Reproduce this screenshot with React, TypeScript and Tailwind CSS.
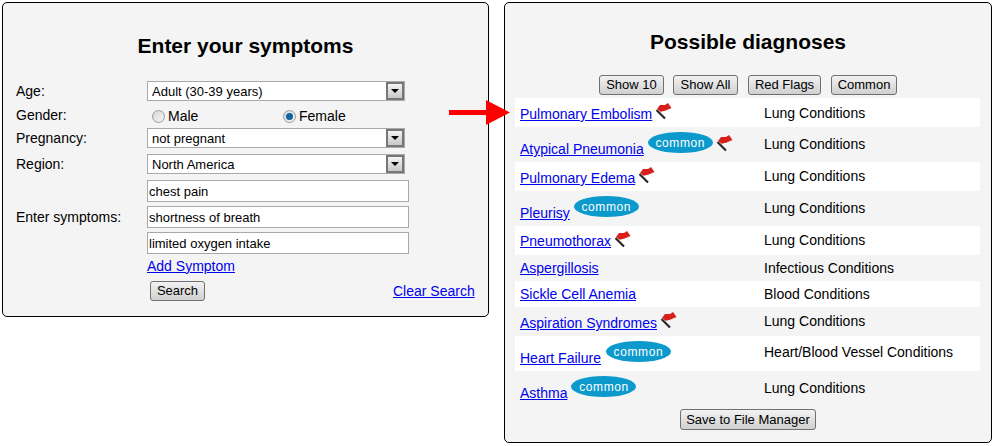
const font = "font-['Liberation_Sans',Arial,sans-serif]";

function Flag() {
  return (
    <svg width="17" height="18" viewBox="0 0 17 18" className="shrink-0">
      <path d="M1.5 8 L10 16.5" stroke="#2a2a2a" strokeWidth="2.2" />
      <path d="M2 7 L5 3 L10 3 L13 1 L16.5 6 L10 8.7 L5.7 9.7 Z" fill="#d8201a" />
    </svg>
  );
}

function Common() {
  return (
    <span className="inline-flex h-[21px] w-[65px] items-center justify-center rounded-[50%] bg-[#0c99cb] text-[12px] leading-none tracking-[0.6px] text-white">
      common
    </span>
  );
}

function Select({ value }: { value: string }) {
  return (
    <div className="flex h-5 w-[258px] items-center justify-between border border-[#a9a9a9] bg-white pl-1 pr-0 text-[13px]">
      <span className="translate-y-[1px]">{value}</span>
      <span className="flex h-[18px] w-[18px] items-center justify-center border-2 border-[#777] bg-gradient-to-b from-[#f4f4f4] to-[#c8c8c8]">
        <span className="h-0 w-0 border-x-[4px] border-t-[4px] border-x-transparent border-t-black" />
      </span>
    </div>
  );
}

function Input({ value }: { value: string }) {
  return (
    <div className="flex h-[22px] w-[262px] items-center border border-[#a9a9a9] bg-white pl-[1px] text-[13px]">
      <span className="translate-y-[1px]">{value}</span>
    </div>
  );
}

function Btn({ label, className = '' }: { label: string; className?: string }) {
  return (
    <button className={`flex h-5 items-center justify-center rounded-[3px] border border-[#707070] bg-gradient-to-b from-[#f2f2f2] to-[#d0d0d0] text-[13px] ${className}`}>
      {label}
    </button>
  );
}

function Radio({ on }: { on?: boolean }) {
  return (
    <span className="flex h-[13px] w-[13px] items-center justify-center rounded-full border border-[#9a9a9a] bg-gradient-to-br from-[#d8d8d8] to-[#f4f4f4]">
      {on && <span className="h-[7px] w-[7px] rounded-full bg-[#14659e]" />}
    </span>
  );
}

const rows = [
  { name: 'Pulmonary Embolism', cat: 'Lung Conditions', h: 'h-[29px]', flag: true, white: true, nameY: 'translate-y-[2px]', catY: 'translate-y-[1px]' },
  { name: 'Atypical Pneumonia', cat: 'Lung Conditions', h: 'h-[35px]', flag: true, common: true, nameY: 'translate-y-[5px]' },
  { name: 'Pulmonary Edema', cat: 'Lung Conditions', h: 'h-[29px]', flag: true, white: true, nameY: 'translate-y-[2px]' },
  { name: 'Pleurisy', cat: 'Lung Conditions', h: 'h-[35px]', common: true, nameY: 'translate-y-[5px]' },
  { name: 'Pneumothorax', cat: 'Lung Conditions', h: 'h-[29px]', flag: true, white: true, nameY: 'translate-y-[1px]' },
  { name: 'Aspergillosis', cat: 'Infectious Conditions', h: 'h-[26px]' },
  { name: 'Sickle Cell Anemia', cat: 'Blood Conditions', h: 'h-[26px]', white: true },
  { name: 'Aspiration Syndromes', cat: 'Lung Conditions', h: 'h-[29px]', flag: true, nameY: 'translate-y-[2px]' },
  { name: 'Heart Failure', cat: 'Heart/Blood Vessel Conditions', h: 'h-[35px]', white: true, common: true, nameY: 'translate-y-[5px]', catY: '-translate-y-[1px]', pill: 'ml-[5px]' },
  { name: 'Asthma', cat: 'Lung Conditions', h: 'h-[35px]', common: true, nameY: 'translate-y-[5px]' },
];

export default function App() {
  return (
    <div className={`${font} relative flex h-[446px] w-[995px] items-start gap-[15px] bg-white pl-[2px] pt-[2px] text-[14px] text-black`}>
      <div className="h-[315px] w-[487px] rounded-[5px] border border-black bg-[#f4f4f4] pl-[13px]">
        <h1 className="pt-[29px] pr-[13px] text-center text-[21px] font-bold leading-[28px]">Enter your symptoms</h1>
        <div className="mt-[21px] flex flex-col">
          <div className="flex h-[20px] items-center">
            <span className="w-[131px]">Age:</span>
            <Select value="Adult (30-39 years)" />
          </div>
          <div className="mt-[3px] flex h-[24px] items-center">
            <span className="w-[131px] -translate-y-[1px]">Gender:</span>
            <span className="flex w-[131px] items-center gap-[3px] pl-[5px]"><Radio /><span>Male</span></span>
            <span className="flex items-center gap-[3px] pl-[5px]"><Radio on /><span>Female</span></span>
          </div>
          <div className="flex h-[20px] items-center">
            <span className="w-[131px]">Pregnancy:</span>
            <Select value="not pregnant" />
          </div>
          <div className="mt-[6px] flex h-[20px] items-center">
            <span className="w-[131px]">Region:</span>
            <Select value="North America" />
          </div>
          <div className="mt-[6px] flex">
            <span className="flex w-[131px] items-center">Enter symptoms:</span>
            <div className="flex flex-col gap-1">
              <Input value="chest pain" />
              <Input value="shortness of breath" />
              <Input value="limited oxygen intake" />
            </div>
          </div>
          <div className="mt-[2px] flex h-[20px] items-center pl-[131px]">
            <a href="#" className="text-[#0000ee] underline">Add Symptom</a>
          </div>
          <div className="mt-[5px] flex h-5 items-center pl-[134px]">
            <Btn label="Search" className="w-[55px]" />
            <a href="#" className="ml-[188px] text-[#0000ee] underline">Clear Search</a>
          </div>
        </div>
      </div>

      <div className="h-[441px] w-[488px] rounded-[5px] border border-black bg-[#f4f4f4] px-[10px]">
        <h1 className="pt-[25px] text-center text-[21px] font-bold leading-[28px]">Possible diagnoses</h1>
        <div className="mt-[19px] flex gap-[9px] pl-[84px]">
          <Btn label="Show 10" className="w-[65px]" />
          <Btn label="Show All" className="w-[65px]" />
          <Btn label="Red Flags" className="ml-[1px] w-[73px]" />
          <Btn label="Common" className="ml-[1px] w-[66px]" />
        </div>
        <div className="mt-[3px] flex w-[465px] flex-col">
          {rows.map((r) => (
            <div key={r.name} className={`flex items-center pl-[5px] ${r.h} ${r.white ? 'bg-white' : ''}`}>
              <div className="flex w-[244px] items-center">
                <a href="#" className={`text-[#0000ee] underline ${r.nameY ?? ''}`}>{r.name}</a>
                {r.common && <span className={`${r.pill ?? 'ml-[4px]'} -translate-y-[2px]`}><Common /></span>}
                {r.flag && <span className="ml-[3px] -translate-y-[2px]"><Flag /></span>}
              </div>
              <span className={r.catY ?? ''}>{r.cat}</span>
            </div>
          ))}
        </div>
        <div className="mt-[3px] flex justify-center">
          <Btn label="Save to File Manager" className="h-[21px] w-[136px]" />
        </div>
      </div>

      <svg width="64" height="26" viewBox="0 0 64 26" className="absolute left-[449px] top-[100px]">
        <rect x="0" y="10" width="38" height="5" fill="#ff0000" />
        <path d="M37 0 L61 12.5 L37 25 Z" fill="#ff0000" />
      </svg>
    </div>
  );
}
